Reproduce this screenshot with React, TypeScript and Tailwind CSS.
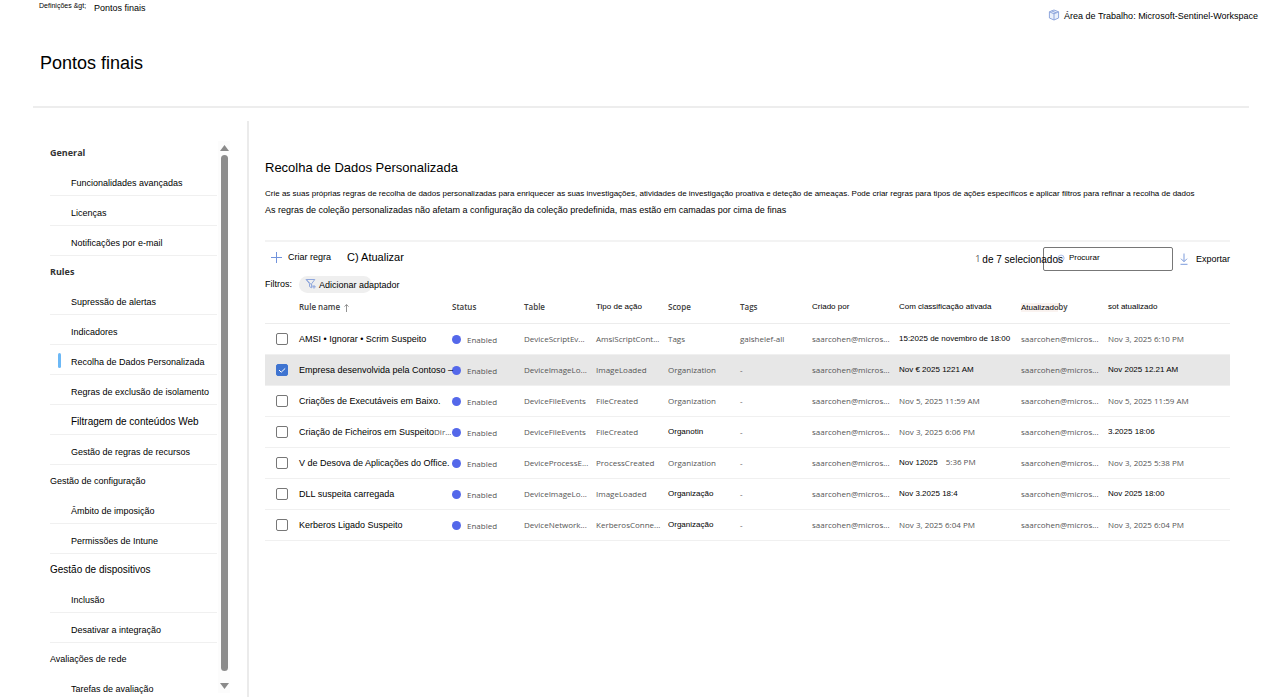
import { useState } from 'react';
import clsx from 'clsx';

type NavGroup = { title: string; original?: boolean; large?: boolean; items: { label: string; large?: boolean }[] };

// `plain` marks text that kept the portal's own lighter font
type Cell = { text: string; plain?: boolean };

type Rule = {
  name: string;
  suffix?: string;
  table: string;
  action: string;
  scope: Cell;
  tags: string;
  created: Cell;
  createdTail?: string;
  updated: Cell;
};

const NAV: NavGroup[] = [
  {
    title: 'General',
    original: true,
    items: [{ label: 'Funcionalidades avançadas' }, { label: 'Licenças' }, { label: 'Notificações por e-mail' }],
  },
  {
    title: 'Rules',
    original: true,
    items: [
      { label: 'Supressão de alertas' },
      { label: 'Indicadores' },
      { label: 'Recolha de Dados Personalizada' },
      { label: 'Regras de exclusão de isolamento' },
      { label: 'Filtragem de conteúdos Web', large: true },
      { label: 'Gestão de regras de recursos' },
    ],
  },
  {
    title: 'Gestão de configuração',
    items: [{ label: 'Âmbito de imposição' }, { label: 'Permissões de Intune' }],
  },
  {
    title: 'Gestão de dispositivos',
    large: true,
    items: [{ label: 'Inclusão' }, { label: 'Desativar a integração' }],
  },
  { title: 'Avaliações de rede', items: [{ label: 'Tarefas de avaliação' }] },
];

const ACTIVE = 'Recolha de Dados Personalizada';

const RULES: Rule[] = [
  {
    name: 'AMSI • Ignorar • Scrim Suspeito',
    table: 'DeviceScriptEv...',
    action: 'AmsiScriptCont...',
    scope: { text: 'Tags', plain: true },
    tags: 'galshelef-all',
    created: { text: '15:2025 de novembro de 18:00' },
    updated: { text: 'Nov 3, 2025 6:10 PM', plain: true },
  },
  {
    name: 'Empresa desenvolvida pela Contoso –',
    table: 'DeviceImageLo...',
    action: 'ImageLoaded',
    scope: { text: 'Organization', plain: true },
    tags: '-',
    created: { text: 'Nov € 2025 1221 AM' },
    updated: { text: 'Nov 2025 12.21 AM' },
  },
  {
    name: 'Criações de Executáveis em Baixo.',
    table: 'DeviceFileEvents',
    action: 'FileCreated',
    scope: { text: 'Organization', plain: true },
    tags: '-',
    created: { text: 'Nov 5, 2025 11:59 AM', plain: true },
    updated: { text: 'Nov 5, 2025 11:59 AM', plain: true },
  },
  {
    name: 'Criação de Ficheiros em Suspeito',
    suffix: 'Dir...',
    table: 'DeviceFileEvents',
    action: 'FileCreated',
    scope: { text: 'Organotin' },
    tags: '-',
    created: { text: 'Nov 3, 2025 6:06 PM', plain: true },
    updated: { text: '3.2025 18:06' },
  },
  {
    name: 'V de Desova de Aplicações do Office.',
    table: 'DeviceProcessE...',
    action: 'ProcessCreated',
    scope: { text: 'Organization', plain: true },
    tags: '-',
    created: { text: 'Nov 12025' },
    createdTail: '5:36 PM',
    updated: { text: 'Nov 3, 2025 5:38 PM', plain: true },
  },
  {
    name: 'DLL suspeita carregada',
    table: 'DeviceImageLo...',
    action: 'ImageLoaded',
    scope: { text: 'Organização' },
    tags: '-',
    created: { text: 'Nov 3.2025 18:4' },
    updated: { text: 'Nov 2025 18:00' },
  },
  {
    name: 'Kerberos Ligado Suspeito',
    table: 'DeviceNetwork...',
    action: 'KerberosConne...',
    scope: { text: 'Organização' },
    tags: '-',
    created: { text: 'Nov 3, 2025 6:04 PM', plain: true },
    updated: { text: 'Nov 3, 2025 6:04 PM', plain: true },
  },
];

const PLAIN = "font-['Open_Sans',sans-serif] text-[8px] text-[#555555]";
const PLAIN_HEAD = "font-['Open_Sans',sans-serif] text-[8px] font-semibold text-[#404040]";

function CubeIcon() {
  return (
    <svg className="size-3" viewBox="0 0 12 12" fill="none" stroke="#8ea6dc" strokeLinejoin="round">
      <path d="M6 1 10.6 2.8v6.2L6 11 1.4 9V2.8Z" fill="#eaf0fb" />
      <path d="M1.4 2.8 6 4.8l4.6-2M6 4.8V11M3.7 1.9l4.6 2" />
    </svg>
  );
}

function FilterIcon() {
  return (
    <svg className="size-3" viewBox="0 0 12 12" fill="none" stroke="#8ea6dc">
      <path d="M1.2 1.5h8.6L6.6 5.8v4L4.5 8.6V5.8Z" strokeLinejoin="round" />
      <path d="m1.2 1.5 6 6M9 7v3.6M7.2 8.8h3.6" />
    </svg>
  );
}

function DownloadIcon() {
  return (
    <svg className="size-3" viewBox="0 0 12 12" fill="none" stroke="#7c9bdb">
      <path d="M6 0.5v8M3 5.7l3 3 3-3M2.5 11.3h7" />
    </svg>
  );
}

function Sidebar() {
  return (
    <div className="flex w-[216px] shrink-0 border-r-2 border-[#ebebeb]">
      <nav aria-label="Definições" className="ml-[17px] w-[167px] pt-4">
        {NAV.map((group) => (
          <section key={group.title}>
            <h2
              className={clsx(
                'flex h-[29px] items-center pt-0.5',
                group.original && "font-['Open_Sans',sans-serif] font-bold text-[#333333]",
                group.large && 'text-[10px]',
              )}
            >
              {group.title}
            </h2>
            <ul>
              {group.items.map((item) => (
                <li key={item.label} className="relative h-[30px] border-b border-[#f0f0f0]">
                  {item.label === ACTIVE && (
                    <span className="absolute top-2 left-2 h-[15px] w-[3px] rounded-sm bg-[#6cb8f6]" />
                  )}
                  <a
                    href="#"
                    className={clsx(
                      'flex h-full items-center pt-1 pl-[21px] whitespace-nowrap',
                      item.large && 'text-[10px]',
                    )}
                  >
                    {item.label}
                  </a>
                </li>
              ))}
            </ul>
          </section>
        ))}
      </nav>
      {/* scroll rail */}
      <div className="mt-5 mb-1 ml-px flex w-3 flex-col items-center gap-1 bg-[#fcfcfc] py-1">
        <svg className="h-[6px] w-[9px]" viewBox="0 0 9 6">
          <path d="M4.5 0 9 6H0Z" fill="#8a8a8a" />
        </svg>
        <div className="mb-2 w-[7px] flex-1 rounded-full bg-[#8c8c8c]" />
        <svg className="h-[6px] w-[9px]" viewBox="0 0 9 6">
          <path d="M0 0h9L4.5 6Z" fill="#8a8a8a" />
        </svg>
      </div>
    </div>
  );
}

function Toolbar() {
  return (
    <div className="flex h-8 items-center border-t-2 border-[#f3f3f3]">
      <button className="flex items-center gap-1 pl-[5px]">
        <svg className="size-[13px]" viewBox="0 0 13 13" fill="none" stroke="#7193dc">
          <path d="M6.5 1v11M1 6.5h11" />
        </svg>
        <span className="pl-px">Criar regra</span>
      </button>
      <button className="ml-4 text-[11px]">C) Atualizar</button>
      <div className="ml-auto flex items-center pt-1">
        <span className="font-['Open_Sans',sans-serif] text-[#555555]">1</span>
        <span className="z-10 -mr-5 ml-0.5 pt-0.5 text-[10px]">de 7 selecionados</span>
        <label className="flex h-6 w-[130px] items-center gap-1 rounded-xs border border-[#777777] bg-white pl-3">
          <svg className="size-[10px]" viewBox="0 0 10 10" fill="none" stroke="#a3b8ea">
            <circle cx="5.7" cy="4" r="3.4" />
            <path d="M3.2 6.5.6 9.4" />
          </svg>
          <input
            type="text"
            aria-label="Procurar"
            placeholder="Procurar"
            className="w-full min-w-0 bg-transparent pb-0.5 text-[8px] outline-none placeholder:text-black"
          />
        </label>
        <button className="ml-[5px] flex items-center gap-[6px]">
          <DownloadIcon />
          Exportar
        </button>
      </div>
    </div>
  );
}

function DataCell({ cell, tail }: { cell: Cell; tail?: string }) {
  return (
    <td>
      <span className={cell.plain ? PLAIN : 'text-[8px]'}>{cell.text}</span>
      {tail && <span className={clsx(PLAIN, 'ml-2')}>{tail}</span>}
    </td>
  );
}

function RulesTable() {
  const [selected, setSelected] = useState<number[]>([1]);

  const toggle = (i: number) => {
    setSelected((prev) => (prev.includes(i) ? prev.filter((n) => n !== i) : [...prev, i]));
  };

  return (
    <table className="w-full table-fixed border-collapse text-left whitespace-nowrap">
      <colgroup>
        <col className="w-[34px]" />
        <col className="w-[153px]" />
        <col className="w-[72px]" />
        <col className="w-[72px]" />
        <col className="w-[72px]" />
        <col className="w-[72px]" />
        <col className="w-[72px]" />
        <col className="w-[87px]" />
        <col className="w-[122px]" />
        <col className="w-[87px]" />
        <col />
      </colgroup>
      <thead>
        <tr className="h-[27px] border-b border-[#ececec] text-[8px] [&>th]:pb-1 [&>th]:font-normal">
          <th />
          <th>
            <span className={PLAIN_HEAD}>Rule name</span>
            <svg className="ml-1 inline h-2 w-[5px]" viewBox="0 0 5 8" fill="none" stroke="#777777" strokeWidth="0.8">
              <path d="M2.5 8V.6M.5 2.6l2-2 2 2" />
            </svg>
          </th>
          <th><span className={PLAIN_HEAD}>Status</span></th>
          <th><span className={PLAIN_HEAD}>Table</span></th>
          <th>Tipo de ação</th>
          <th><span className={PLAIN_HEAD}>Scope</span></th>
          <th><span className={PLAIN_HEAD}>Tags</span></th>
          <th>Criado por</th>
          <th>Com classificação ativada</th>
          <th>
            <span className="bg-[#faf3f0]">Atualizado</span>
            <span className={PLAIN_HEAD}>by</span>
          </th>
          <th>sot atualizado</th>
        </tr>
      </thead>
      <tbody>
        {RULES.map((rule, i) => {
          const on = selected.includes(i);
          return (
            <tr key={rule.name} className={clsx('h-[31px] border-b border-[#f0f0f0]', on && 'bg-[#e7e7e7]')}>
              <td>
                <span className="ml-[11px] grid size-3">
                  <input
                    type="checkbox"
                    aria-label={rule.name}
                    checked={on}
                    onChange={() => toggle(i)}
                    className="col-start-1 row-start-1 size-3 appearance-none rounded-xs border border-[#777777] bg-white checked:border-[#3f74d1] checked:bg-[#3f74d1]"
                  />
                  {on && (
                    <svg
                      className="pointer-events-none col-start-1 row-start-1 size-3"
                      viewBox="0 0 12 12"
                      fill="none"
                      stroke="white"
                    >
                      <path d="m3 6 2.2 2.2L9.2 4.4" />
                    </svg>
                  )}
                </span>
              </td>
              <td>
                <span className="relative z-10">{rule.name}</span>
                {rule.suffix && <span className={PLAIN}>{rule.suffix}</span>}
              </td>
              <td>
                <span className="flex items-center gap-[6px] pt-0.5">
                  <span className="size-[9px] rounded-full bg-[#5468ea]" />
                  <span className={PLAIN}>Enabled</span>
                </span>
              </td>
              <td className={PLAIN}>{rule.table}</td>
              <td className={PLAIN}>{rule.action}</td>
              <DataCell cell={rule.scope} />
              <td className={PLAIN}>{rule.tags}</td>
              <td className={PLAIN}>saarcohen@micros...</td>
              <DataCell cell={rule.created} tail={rule.createdTail} />
              <td className={PLAIN}>saarcohen@micros...</td>
              <DataCell cell={rule.updated} />
            </tr>
          );
        })}
      </tbody>
    </table>
  );
}

export default function App() {
  return (
    <div className="flex h-screen flex-col overflow-hidden bg-white font-['Liberation_Sans',Arial,sans-serif] text-[9px] leading-3 text-black">
      <header className="mr-3 ml-[33px] h-[108px] shrink-0 border-b-2 border-[#ededed]">
        <div className="flex justify-between">
          <nav aria-label="Caminho" className="flex gap-2 pl-[6px]">
            <a href="#" className="text-[7px]">Definições &amp;gt;</a>
            <a href="#" className="pt-0.5">Pontos finais</a>
          </nav>
          <div className="-mr-[9px] flex items-center gap-1 pt-2">
            <CubeIcon />
            <span className="pt-0.5">Área de Trabalho: Microsoft-Sentinel-Workspace</span>
          </div>
        </div>
        <h1 className="mt-[29px] pl-[7px] text-lg leading-6">Pontos finais</h1>
      </header>

      <div className="ml-[33px] flex min-h-0 flex-1 pt-[13px]">
        <Sidebar />
        <main className="min-w-0 flex-1 pt-[39px] pr-[31px] pl-4">
          <h2 className="text-[13px] leading-4">Recolha de Dados Personalizada</h2>
          <p className="mt-3 text-[8px] whitespace-nowrap">
            Crie as suas próprias regras de recolha de dados personalizadas para enriquecer as suas investigações,
            atividades de investigação proativa e deteção de ameaças. Pode criar regras para tipos de ações específicos
            e aplicar filtros para refinar a recolha de dados
          </p>
          <p className="mt-1 mb-6">
            As regras de coleção personalizadas não afetam a configuração da coleção predefinida, mas estão em camadas
            por cima de finas
          </p>
          <Toolbar />
          <div className="flex h-6 items-center gap-[7px]">
            <span>Filtros:</span>
            <button className="flex h-[17px] w-[73px] items-center gap-[2px] rounded-full bg-[#efefef] pl-[6px] whitespace-nowrap">
              <span className="shrink-0"><FilterIcon /></span>
              <span className="pt-0.5">Adicionar adaptador</span>
            </button>
          </div>
          <RulesTable />
        </main>
      </div>
    </div>
  );
}
